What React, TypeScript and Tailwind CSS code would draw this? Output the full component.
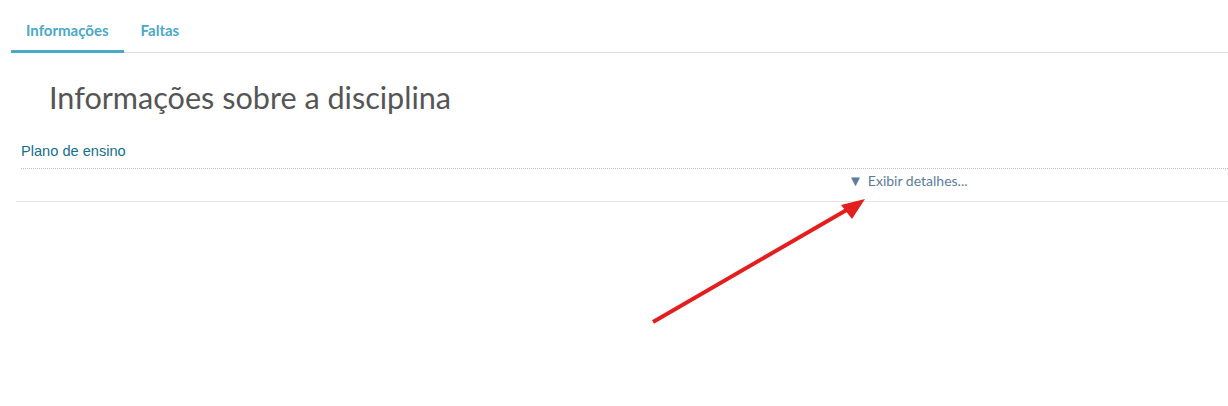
import React from "react";

function Tabs() {
  return (
    <div className="ml-[11px] flex border-b border-[#dddddd]">
      <div className="-mb-px border-b-[3px] border-[#4aa8c8] px-[15px] pt-[20px] pb-[10px] text-[15px] font-bold leading-[20px] text-[#4aa8c8]">
        Informações
      </div>
      <div className="px-[17px] pt-[20px] pb-[10px] text-[15px] font-bold leading-[20px] text-[#4aa8c8]">
        Faltas
      </div>
    </div>
  );
}

function Arrow() {
  return (
    <svg
      className="pointer-events-none absolute left-0 top-0"
      width="1228"
      height="406"
      viewBox="0 0 1228 406"
    >
      <line x1="653" y1="322" x2="850" y2="208" stroke="#e31e1e" strokeWidth="4" />
      <polygon points="865,199 841,205 852,219" fill="#e31e1e" />
    </svg>
  );
}

export default function App() {
  return (
    <div
      className="relative h-[406px] w-[1228px] overflow-hidden bg-white"
      style={{ fontFamily: "Lato, 'Open Sans', sans-serif" }}
    >
      <Tabs />

      <h1 className="ml-[49px] mt-[27px] text-[30.6px] font-normal leading-[36px] text-[#555555]">
        Informações sobre a disciplina
      </h1>

      <div className="ml-[16px] mt-[27px] border-b border-[#e3e3e3]">
        <div className="ml-[5px] border-b border-dotted border-[#c4c4c4] pb-[9px] font-['Liberation_Sans',Arial,sans-serif] text-[14.6px] leading-[16px] text-[#136f8f]">
          Plano de ensino
        </div>
        <div className="flex h-[32px] items-start pl-[832px] pt-[3px] text-[14px] text-[#5b7c9c]">
          <span className="mr-[5px] font-['Liberation_Sans',Arial,sans-serif] text-[15px] leading-[18px]">▼</span>
          <span className="leading-[17px]">Exibir detalhes...</span>
        </div>
      </div>

      <Arrow />
    </div>
  );
}
